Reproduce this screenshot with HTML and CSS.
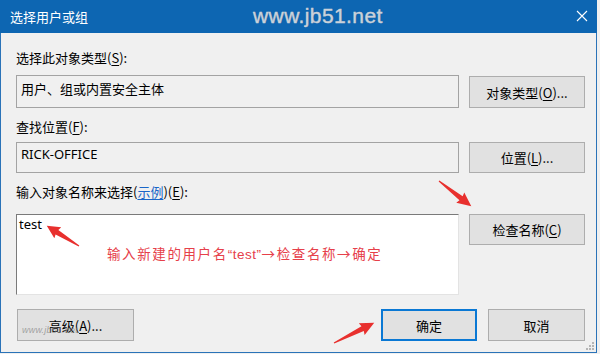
FILE: index.html
```html
<!DOCTYPE html>
<html lang="zh-CN">
<head>
<meta charset="utf-8">
<title>选择用户或组</title>
<link rel="stylesheet" href="styles.css">
</head>
<body>
<div class="window">
  <div class="titlebar">
    <span class="title">选择用户或组</span>
    <span class="wm">www.jb51.net</span>
    <svg class="close" width="12" height="12" viewBox="0 0 12 12"><path d="M1 1L11 11M11 1L1 11" stroke="#fff" stroke-width="1.1"/></svg>
  </div>
  <div class="content">
    <div class="label l1">选择此对象类型(<u>S</u>):</div>
    <div class="row r1">
      <div class="box ro t1">用户、组或内置安全主体</div>
      <button class="btn">对象类型(<u>O</u>)...</button>
    </div>
    <div class="label l2">查找位置(<u>F</u>):</div>
    <div class="row r2">
      <div class="box ro t2">RICK-OFFICE</div>
      <button class="btn">位置(<u>L</u>)...</button>
    </div>
    <div class="label l3">输入对象名称来选择(<a class="link">示例</a>)(<u>E</u>):</div>
    <div class="row r3">
      <div class="box edit">test</div>
      <button class="btn">检查名称(<u>C</u>)</button>
    </div>
    <div class="footer">
      <button class="btn adv"><span class="wm2">www.jb51.net</span>高级(<u>A</u>)...</button>
      <div class="pair">
        <button class="btn ok">确定</button>
        <button class="btn cancel">取消</button>
      </div>
    </div>
  </div>
  <div class="note">输入新建的用户名<span class="lat">“test”</span>→检查名称→确定</div>
  <svg class="arrows" width="600" height="354" viewBox="0 0 600 354">
    <g fill="#e8302e">
      <polygon transform="translate(79,246) rotate(212)" points="0,-0.6 26,-2.6 25,-6.5 38,0 25,6.5 26,2.6 0,0.6"/>
      <polygon transform="translate(439,181) rotate(38)" points="0,-0.6 28,-2.6 27,-6.5 41,0 27,6.5 28,2.6 0,0.6"/>
      <polygon transform="translate(334,343) rotate(-26.6)" points="0,-0.6 32,-2.6 31,-6.5 45,0 31,6.5 32,2.6 0,0.6"/>
    </g>
    <g fill="#b5b5b5">
      <rect x="592" y="342" width="2" height="2"/>
      <rect x="589" y="345" width="2" height="2"/>
      <rect x="592" y="345" width="2" height="2"/>
      <rect x="586" y="348" width="2" height="2"/>
      <rect x="589" y="348" width="2" height="2"/>
      <rect x="592" y="348" width="2" height="2"/>
    </g>
  </svg>
</div>
</body>
</html>
```
FILE: styles.css
```css
* { box-sizing: border-box; }
html, body { margin: 0; padding: 0; }
body {
  width: 600px;
  height: 354px;
  overflow: hidden;
  background: #f0f0f0;
  font-family: "Noto Sans CJK SC", "Liberation Sans", sans-serif;
  font-size: 13px;
  color: #000;
}
.window {
  position: relative;
  width: 597px;
  height: 353px;
  background: #f0f0f0;
  border: 1px solid #2a73b8;
  border-top: none;
  display: flex;
  flex-direction: column;
}
.titlebar {
  position: relative;
  height: 33px;
  margin: 0 -1px;
  background: #0d66b2;
  color: #fff;
  display: flex;
  align-items: center;
  padding-left: 10px;
}
.title { font-size: 13px; line-height: 18px; }
.wm {
  position: absolute;
  left: 253px;
  top: 4px;
  font-family: "Liberation Sans", sans-serif;
  font-size: 21px;
  letter-spacing: 0.4px;
  color: #c9d2dc;
  -webkit-text-stroke: 0.4px #c9d2dc;
  text-shadow: 0 0 1px #3f6488;
}
.close { position: absolute; left: 576px; top: 10px; }
.content {
  padding: 0 11px 0 15px;
  display: flex;
  flex-direction: column;
}
.label { line-height: 18px; height: 18px; white-space: nowrap; }
.l1 { margin-top: 16px; }
.l2 { margin-top: 10px; }
.l3 { margin-top: 10px; }
u { text-decoration: underline; text-underline-offset: 2px; }
.link { color: #1a66c8; text-decoration: underline; text-underline-offset: 2px; }
.row {
  display: grid;
  grid-template-columns: 443px 116px;
  column-gap: 10px;
  align-items: start;
}
.r1 { margin-top: 8px; }
.r2 { margin-top: 6px; }
.r3 { margin-top: 13px; }
.box {
  border: 1px solid #a3a3a3;
  padding-left: 4px;
  line-height: 18px;
}
.ro { background: #f0f0f0; }
.t1 { height: 33px; padding-top: 4px; }
.t2 { height: 31px; padding-top: 2px; font-family: "Noto Sans", "Liberation Sans", sans-serif; font-size: 13px; }
.edit {
  height: 81px;
  background: #fff;
  border-color: #7a7a7a #e3e3e3 #e3e3e3 #7a7a7a;
  padding-left: 2px;
  padding-top: 0;
  font-family: "Noto Sans", "Liberation Sans", sans-serif;
}
.btn {
  font: inherit;
  color: #000;
  background: #e1e1e1;
  border: 1px solid #adadad;
  height: 32px;
  padding: 0;
  margin: 0;
  display: flex;
  align-items: center;
  justify-content: center;
  white-space: nowrap;
}
.r1 .btn { margin-top: 1px; height: 32px; }
.r2 .btn { height: 31px; }
.r3 .btn { height: 31px; }
.footer {
  margin-top: 14px;
  display: flex;
  justify-content: space-between;
  align-items: start;
}
.adv { position: relative; width: 117px; margin-left: 1px; }
.wm2 {
  position: absolute;
  left: 4px;
  top: 15px;
  font-family: "Liberation Sans", sans-serif;
  font-size: 9px;
  font-style: italic;
  color: rgba(130,130,130,0.7);
  letter-spacing: 0.2px;
  line-height: 10px;
}
.pair { display: flex; gap: 11px; }
.ok { width: 96px; height: 32px; border: 2px solid #0a78d4; }
.cancel { width: 97px; height: 32px; }
.note {
  position: absolute;
  left: 106px;
  top: 244px;
  color: #e6404a;
  font-size: 13.5px;
  letter-spacing: 1.6px;
  line-height: 18px;
  white-space: nowrap;
}
.lat { font-family: "Liberation Sans", sans-serif; letter-spacing: 0.5px; }
.arrows { position: absolute; left: -1px; top: 0; pointer-events: none; }
```
